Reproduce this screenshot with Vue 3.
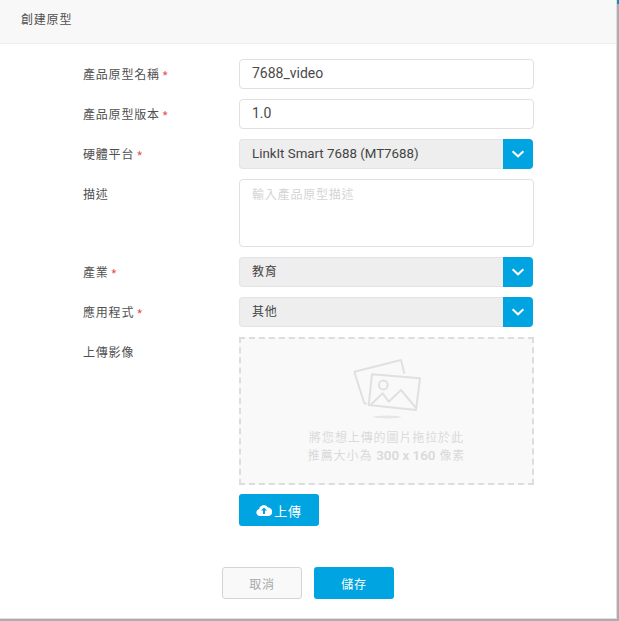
<script setup>
const rows = [
  { label: '產品原型名稱', req: true, value: '7688_video', kind: 'input' },
  { label: '產品原型版本', req: true, value: '1.0', kind: 'input' },
  { label: '硬體平台', req: true, value: 'LinkIt Smart 7688 (MT7688)', kind: 'select' },
  { label: '描述', req: false, value: '輸入產品原型描述', kind: 'area' },
  { label: '產業', req: true, value: '教育', kind: 'select', cjk: true },
  { label: '應用程式', req: true, value: '其他', kind: 'select', cjk: true }
]
</script>

<template>
  <div class="modal">
    <header class="head">創建原型</header>
    <form class="form" @submit.prevent>
      <template v-for="r in rows" :key="r.label">
        <div class="label">{{ r.label }}<span v-if="r.req" class="req">*</span></div>
        <div v-if="r.kind === 'input'" class="field">{{ r.value }}</div>
        <div v-else-if="r.kind === 'area'" class="field area">{{ r.value }}</div>
        <div v-else class="select">
          <div class="select-value" :class="{ cjk: r.cjk }">{{ r.value }}</div>
          <div class="select-btn">
            <svg width="14" height="8" viewBox="0 0 14 8"><path d="M1.6 1.3 7 6.3l5.4-5" fill="none" stroke="#fff" stroke-width="2"/></svg>
          </div>
        </div>
      </template>
      <div class="label">上傳影像</div>
      <div class="upload-col">
        <div class="drop">
          <svg class="pic" width="72" height="62" viewBox="0 0 72 62">
            <g fill="none" stroke="#e0e0e0" stroke-width="2" stroke-linejoin="round">
              <path d="M16 45.8 13.3 45.3 3.3 13.7 50 2l3.4 13.8"/>
              <path d="M21 16.3 69 20.3 65 52 17.7 47Z" fill="#f9f9f9"/>
              <circle cx="32.3" cy="27" r="4.4"/>
              <path d="M20 46.5 31.7 35.3l6 8.4L50 32l15 18"/>
            </g>
            <ellipse cx="36" cy="59" rx="14" ry="1.4" fill="#e6e6e6"/>
          </svg>
          <p class="drop-text">將您想上傳的圖片拖拉於此<br>推薦大小為 <b>300 x 160</b> 像素</p>
        </div>
        <button class="btn upload" type="button">
          <svg width="16" height="12" viewBox="0 0 16 12"><path fill="#fff" fill-rule="evenodd" d="M4 12a3.6 3.6 0 0 1-.9-7.1A4.8 4.8 0 0 1 12 3.6 4.2 4.2 0 0 1 12.2 12ZM8 3.4 5 6.6h2V10h2V6.6h2Z"/></svg>
          <span>上傳</span>
        </button>
      </div>
    </form>
    <footer class="foot">
      <button class="btn cancel" type="button">取消</button>
      <button class="btn save" type="button">儲存</button>
    </footer>
    <span class="corner"></span>
  </div>
</template>

<style scoped>
.modal {
  position: relative;
  width: 619px;
  height: 621px;
  box-sizing: border-box;
  background: #fff;
  border-right: 2px solid #adadad;
  border-bottom: 2px solid #adadad;
  box-shadow: inset -1px -1px 0 #dedede;
  font-family: Roboto, "Noto Sans CJK TC", sans-serif;
  font-size: 12px;
  color: #505050;
  display: flex;
  flex-direction: column;
}
.corner {
  position: absolute;
  top: 0;
  right: -2px;
  width: 2px;
  height: 4px;
  background: #0a8ec4;
}
.head {
  height: 44px;
  box-sizing: border-box;
  background: #f8f8f8;
  border-bottom: 1px solid #eeeeee;
  border-right: 1px solid #dedede;
  padding: 10px 0 0 21px;
  line-height: 20px;
  letter-spacing: 0.8px;
}
.form {
  display: grid;
  grid-template-columns: 156px 295px;
  row-gap: 10px;
  padding: 15px 0 0 83px;
}
.label {
  height: 30px;
  line-height: 32px;
  letter-spacing: 0.8px;
  white-space: nowrap;
}
.req {
  color: #e8453c;
  margin-left: 3px;
  font-size: 11px;
}
.field {
  height: 30px;
  box-sizing: border-box;
  border: 1px solid #e0e0e0;
  border-radius: 4px;
  padding: 0 12px;
  line-height: 27px;
  font-size: 14px;
  color: #4a4a4a;
}
.area {
  height: 68px;
  font-size: 12px;
  line-height: 31px;
  letter-spacing: 0.8px;
  color: #d4d4d4;
}
.select {
  display: flex;
  height: 30px;
  width: 294px;
}
.select-value {
  flex: 1;
  box-sizing: border-box;
  background: #eeeeee;
  border: 1px solid #e4e4e4;
  border-right: 0;
  border-radius: 4px 0 0 4px;
  padding: 0 12px;
  line-height: 27px;
  font-size: 13.3px;
  color: #444;
}
.select-value.cjk {
  font-size: 12px;
  line-height: 29px;
  letter-spacing: 0.8px;
}
.select-btn {
  width: 30px;
  background: #00a4e1;
  border-radius: 0 4px 4px 0;
  display: flex;
  align-items: center;
  justify-content: center;
}
.upload-col {
  display: flex;
  flex-direction: column;
  align-items: flex-start;
}
.drop {
  width: 295px;
  height: 148px;
  box-sizing: border-box;
  background: #f9f9f9;
  border: 2px dashed #dddddd;
  display: flex;
  flex-direction: column;
  align-items: center;
  padding-top: 19px;
}
.drop-text {
  margin: 9px 0 0;
  text-align: center;
  font-size: 12px;
  line-height: 18px;
  letter-spacing: 0.9px;
  color: #dadada;
}
.drop-text b {
  font-size: 13.4px;
  font-weight: 600;
  letter-spacing: 0;
}
.btn {
  width: 80px;
  height: 32px;
  box-sizing: border-box;
  border: 0;
  border-radius: 3px;
  font: inherit;
  font-size: 12px;
  letter-spacing: 0.8px;
  padding: 0;
  display: flex;
  align-items: center;
  justify-content: center;
}
.upload {
  margin-top: 9px;
  background: #00a4e1;
  color: #fff;
  gap: 2px;
  font-size: 13px;
}
.foot {
  display: flex;
  gap: 12px;
  padding: 41px 0 0 222px;
}
.cancel {
  background: #f9f9f9;
  border: 1px solid #d4d4d4;
  color: #a8a8a8;
}
.save {
  background: #00a4e1;
  color: #fff;
}
</style>
